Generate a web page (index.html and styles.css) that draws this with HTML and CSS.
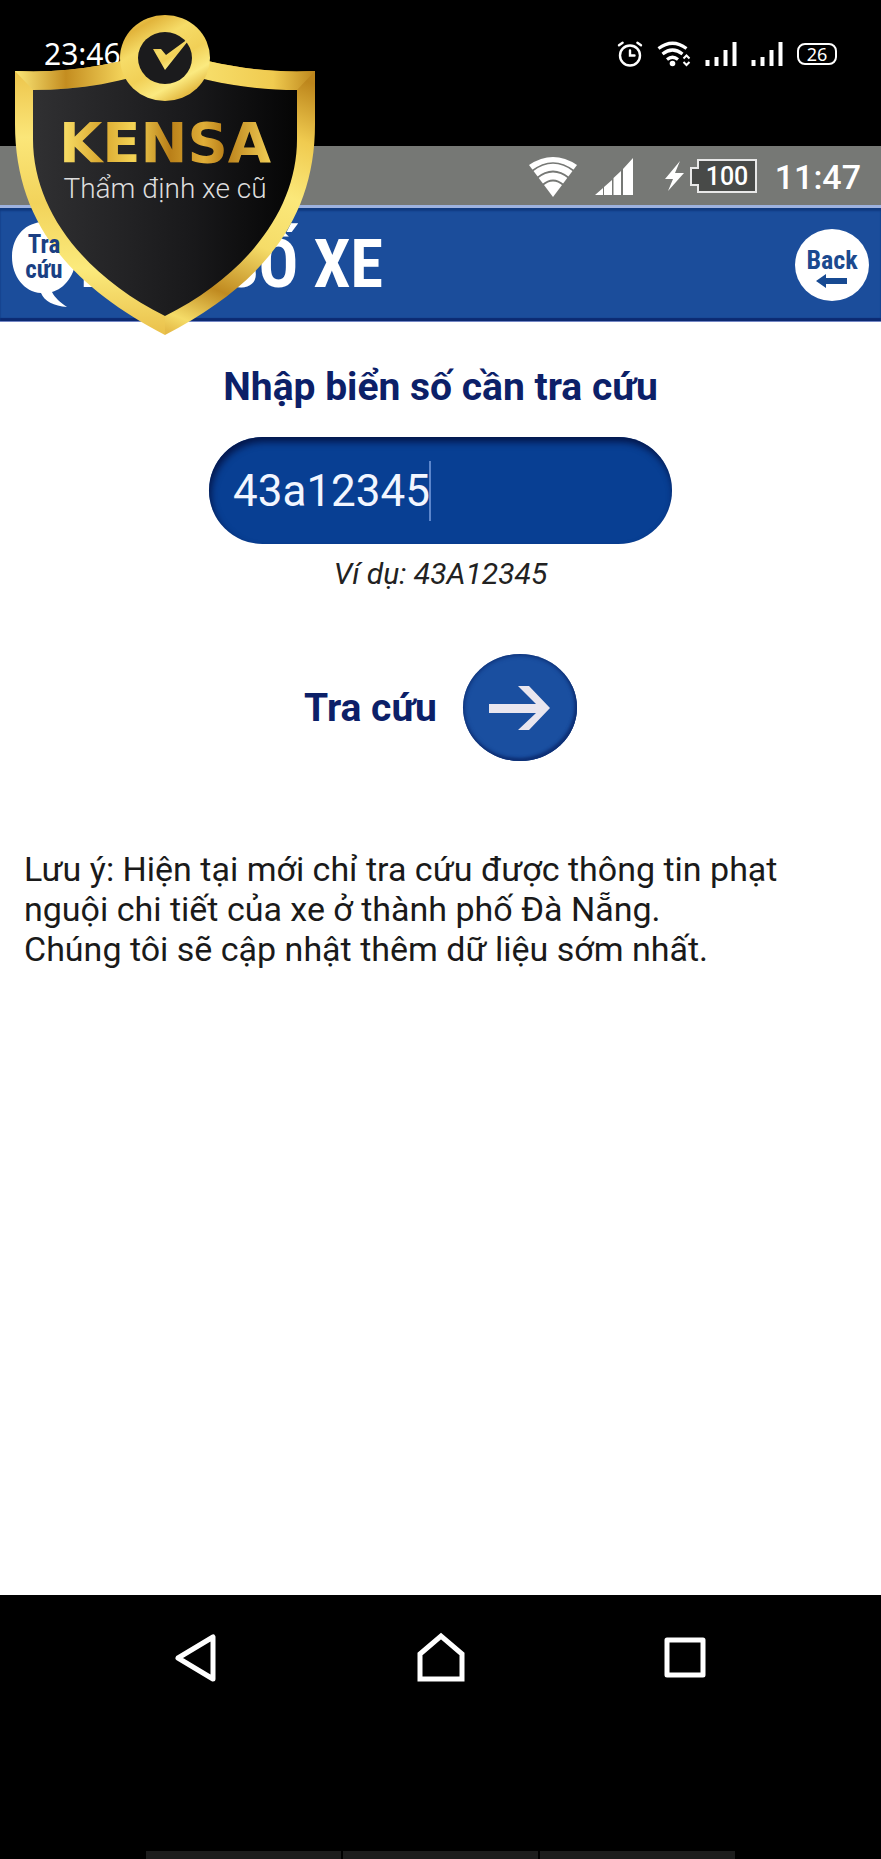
FILE: index.html
```
<!DOCTYPE html>
<html lang="vi">
<head>
<meta charset="utf-8">
<meta name="viewport" content="width=device-width, initial-scale=1">
<title>Tra cứu biển số xe</title>
<link rel="stylesheet" href="styles.css">
</head>
<body>
<div class="phone-bar">
  <span class="phone-time">23:46</span>
  <div class="phone-icons">
    <svg width="26" height="26" viewBox="0 0 26 26" fill="none" stroke="#fff" stroke-width="2.400" stroke-linecap="round"><circle cx="13" cy="14.500" r="10"/><path d="M13 9.500v5h4.500M2 4.200l3.600-2.500M24 4.200l-3.600-2.500"/></svg>
    <svg width="34" height="26" viewBox="0 0 34 26" fill="none" stroke="#fff" stroke-width="3.200"><path d="M1.500 7.500Q15.500-3 29.500 7.500M5.500 13Q15.500 5 25.500 13M10 18.500Q15.500 14 21 18.500"/><circle cx="15.500" cy="22.500" r="2.800" fill="#fff" stroke="none"/><path d="M26.500 17.500l3-3 3 3M26.500 21l3 3 3-3" stroke-width="2"/></svg>
    <svg width="32" height="26" viewBox="0 0 32 26" stroke="#fff" stroke-width="4"><path d="M2.500 19v6M11.500 16v9M20.500 9v16M29.500 1v24"/></svg>
    <svg width="32" height="26" viewBox="0 0 32 26" stroke="#fff" stroke-width="4"><path d="M2.500 19v6M11.500 16v9M20.500 9v16M29.500 1v24"/></svg>
    <span class="battery-small">26</span>
  </div>
</div>
<div class="system-bar">
  <svg width="48" height="40" viewBox="0 0 48 40" fill="#fff"><path d="M0 8Q24-8 48 8L24 40Z"/><path d="M3 14Q24-2 45 14M8 21Q24 8 40 21M13.500 28Q24 19 34.500 28" fill="none" stroke="#767875" stroke-width="1.700"/></svg>
  <svg class="signal-big" width="38" height="38" viewBox="0 0 38 38" fill="#fff"><path d="M0 37L8 30V37ZM9 29L17 22V37H9ZM18.500 20L26 13V37H18.500ZM28 11L38 0V37H28Z"/></svg>
  <svg width="92" height="36" viewBox="0 0 92 36"><path d="M15 2L0 20H8L3 32L19 14H10Z" fill="#fff"/><path d="M33 1H91V33H33V26H26V9H33Z" fill="#484a48" stroke="#e8e8e8" stroke-width="2"/><text class="battery-text" x="62" y="26" text-anchor="middle">100</text></svg>
  <span class="system-time">11:47</span>
</div>
<header class="header">
  <div class="bubble">
    <svg class="bubble-shape" viewBox="0 0 64 86" fill="#fff"><path d="M32 0C49 0 64 14 64 34C64 53 52 67 40 70C43 76 48 80 55 85C42 84 32 79 29 71C12 70 0 54 0 35C0 14 14 0 32 0Z"/></svg>
    <span class="bubble-text">Tra<br>cứu</span>
  </div>
  <h1 class="title">BIỂN SỐ XE</h1>
  <button class="back" type="button">Back
    <svg width="32" height="14" viewBox="0 0 32 14" fill="#174a92"><path d="M0 7L10 0V4H31V10H10V14Z"/></svg>
  </button>
</header>
<svg class="shield" width="300" height="322" viewBox="0 0 300 322" role="img" aria-label="Kensa">
  <defs>
    <linearGradient id="rim" x1="0" y1="0" x2="300" y2="0" gradientUnits="userSpaceOnUse">
      <stop offset="0" stop-color="#fbe878"/><stop offset=".17" stop-color="#c48d20"/><stop offset=".36" stop-color="#f3d35a"/><stop offset=".65" stop-color="#f6dc68"/><stop offset=".86" stop-color="#f0cb50"/><stop offset="1" stop-color="#bd861c"/>
    </linearGradient>
    <linearGradient id="side" x1="0" y1="58" x2="0" y2="320" gradientUnits="userSpaceOnUse">
      <stop offset="0" stop-color="#edc54c"/><stop offset=".25" stop-color="#fbe679"/><stop offset=".5" stop-color="#f2d35b"/><stop offset=".75" stop-color="#fbea7c"/><stop offset="1" stop-color="#eac14b"/>
    </linearGradient>
    <linearGradient id="sideright" x1="270" y1="58" x2="160" y2="320" gradientUnits="userSpaceOnUse">
      <stop offset="0" stop-color="#bd861c"/><stop offset=".2" stop-color="#f0cb50"/><stop offset=".4" stop-color="#fbe87a"/><stop offset=".6" stop-color="#f5dc68"/><stop offset=".8" stop-color="#c08a20"/><stop offset=".94" stop-color="#f5dc68"/><stop offset="1" stop-color="#e5bb48"/>
    </linearGradient>
    <linearGradient id="dark"><stop offset="0" stop-color="#303032"/><stop offset=".6" stop-color="#19191b"/><stop offset="1" stop-color="#050505"/></linearGradient>
    <linearGradient id="ring" x1="0" y1="0" x2=".6" y2="1"><stop offset="0" stop-color="#fbe573"/><stop offset=".2" stop-color="#e2b43b"/><stop offset=".4" stop-color="#f6dc68"/><stop offset=".65" stop-color="#f1d057"/><stop offset=".85" stop-color="#fbea80"/><stop offset="1" stop-color="#e5bc45"/></linearGradient>
    <linearGradient id="word"><stop offset="0" stop-color="#fbe36c"/><stop offset=".2" stop-color="#d9a72f"/><stop offset=".35" stop-color="#f4d355"/><stop offset=".52" stop-color="#b97f18"/><stop offset=".68" stop-color="#e0ae38"/><stop offset=".78" stop-color="#b97f18"/><stop offset="1" stop-color="#f2cf57"/></linearGradient>
  </defs>
  <path d="M0 57C55 60 105 49 150 36V321C52 270 0 205 0 110Z" fill="url(#side)"/>
  <path d="M300 57C245 60 195 49 150 36V321C248 270 300 205 300 110Z" fill="url(#sideright)"/>
  <path d="M0 57C55 60 105 49 150 36C195 49 245 60 300 57L282 76C235 76 190 68 150 53C110 68 65 76 18 76Z" fill="url(#rim)"/>
  <path d="M18 76C65 76 110 68 150 53C190 68 235 76 282 76V125C282 197 230 262 150 302C70 262 18 197 18 125Z" fill="url(#dark)"/>
  <ellipse cx="150" cy="44" rx="45" ry="43" fill="url(#ring)"/>
  <ellipse cx="150" cy="44" rx="27" ry="26" fill="#1b1b1d"/>
  <path d="M138 35L146 35L151 41L177 22L150 56Z" fill="url(#ring)"/>
  <text class="brand" x="150" y="148" text-anchor="middle" fill="url(#word)">KENSA</text>
  <text class="slogan" x="150" y="184" text-anchor="middle">Thẩm định xe cũ</text>
</svg>
<main class="content">
  <form class="form">
    <label class="form-title" for="plate">Nhập biển số cần tra cứu</label>
    <div class="field">
      <input class="field-input" id="plate" type="text" value="43a12345">
      <span class="caret"></span>
    </div>
    <p class="hint">Ví dụ: 43A12345</p>
    <div class="action">
      <label for="search">Tra cứu</label>
      <button class="search" id="search" type="button" aria-label="Tra cứu">
        <svg width="62" height="46" viewBox="0 0 62 46" fill="#e9e6ef"><path d="M0 19H47L29 1H40L61 23L40 45H29L47 28H0Z"/></svg>
      </button>
    </div>
  </form>
  <p class="note">Lưu ý: Hiện tại mới chỉ tra cứu được thông tin phạt nguội chi tiết của xe ở thành phố Đà Nẵng.<br>Chúng tôi sẽ cập nhật thêm dữ liệu sớm nhất.</p>
</main>
<nav class="nav">
  <div class="nav-buttons">
    <button class="nav-button" type="button" aria-label="Quay lại"><svg width="44" height="52" viewBox="0 0 44 52" fill="none" stroke="#fff" stroke-width="5" stroke-linejoin="round"><path d="M39 5V47L4 26Z"/></svg></button>
    <button class="nav-button" type="button" aria-label="Trang chủ"><svg width="48" height="52" viewBox="0 0 48 52" fill="none" stroke="#fff" stroke-width="5"><path d="M3 22L24 4L45 22V47H3Z"/></svg></button>
    <button class="nav-button" type="button" aria-label="Gần đây"><svg width="44" height="52" viewBox="0 0 44 52" fill="none" stroke="#fff" stroke-width="5" stroke-linejoin="round"><path d="M4 8H40V43H4Z"/></svg></button>
  </div>
  <div class="keys"><span></span><span></span><span></span></div>
</nav>
</body>
</html>
```
FILE: styles.css
```
* { box-sizing: border-box; }
body {
  margin: 0;
  min-height: 100vh;
  display: flex;
  flex-direction: column;
  position: relative;
  background: #fff;
  font-family: Roboto, "Noto Sans", sans-serif;
}
button { border: 0; padding: 0; background: none; font: inherit; cursor: pointer; }
svg { display: block; flex: none; }

.phone-bar {
  display: flex;
  justify-content: space-between;
  align-items: flex-start;
  padding: 38px 44px 76px 44px;
  background: #000;
  color: #fff;
}
.phone-time { font: 30px/32px "Noto Sans", sans-serif; }
.phone-icons { display: flex; align-items: center; gap: 14px; padding-top: 3px; }
.battery-small {
  width: 40px;
  border: 2px solid #fff;
  border-radius: 8px;
  font: 18px/18px "Noto Sans", sans-serif;
  text-align: center;
}

.system-bar {
  display: flex;
  justify-content: flex-end;
  align-items: center;
  padding: 2px 20px 0 20px;
  height: 59px;
  background: #767875;
  color: #fff;
}
.signal-big { margin: 0 32px 0 18px; }
.battery-text { font: 500 25px Roboto, sans-serif; fill: #fff; }
.system-time { margin-left: 18px; font-size: 34px; font-weight: 500; line-height: 40px; }

.header {
  display: flex;
  align-items: center;
  height: 117px;
  padding: 0 12px;
  background: #1b4d9b;
  border-top: 3px solid #9db2e0;
  border-bottom: 1px solid #7386c4;
  box-shadow: inset 0 3px 2px #103a80, inset 0 -3px 1px #0c2a72;
}
.bubble { display: grid; width: 64px; }
.bubble-shape { grid-area: 1 / 1; width: 64px; }
.bubble-text {
  grid-area: 1 / 1;
  padding-top: 10px;
  color: #1a3f83;
  font: bold 25px/25px "Roboto Condensed", "Liberation Sans Narrow", Roboto, sans-serif;
  text-align: center;
  z-index: 1;
}
.title {
  flex: 1;
  margin: 0 0 0 4px;
  color: #fff;
  font: bold 66px/80px "Roboto Condensed", "Liberation Sans Narrow", Roboto, sans-serif;
  white-space: nowrap;
}
.back {
  display: flex;
  flex-direction: column;
  align-items: center;
  width: 74px;
  height: 72px;
  padding-top: 17px;
  border-radius: 50%;
  background: #fff;
  color: #1c4a8f;
  font: bold 26px/28px "Roboto Condensed", "Liberation Sans Narrow", Roboto, sans-serif;
}

.shield { position: absolute; left: 15px; top: 14px; }
.brand { font: bold 56px "DejaVu Sans", sans-serif; }
.slogan { font: 300 28px Roboto, sans-serif; fill: #ddd; }

.content { flex: 1; padding: 40px 24px; }
.form { display: flex; flex-direction: column; align-items: center; }
.form-title { color: #0c2068; font-size: 39px; font-weight: 700; line-height: 50px; }
.field {
  display: flex;
  align-items: center;
  width: 463px;
  max-width: 100%;
  height: 107px;
  margin-top: 25px;
  padding: 0 24px;
  border-radius: 54px;
  background: #083f93;
  box-shadow: inset 2px 5px 7px #04164a;
}
.field-input {
  width: 196px;
  padding: 0;
  border: 0;
  outline: 0;
  background: none;
  color: #f2f6ff;
  font: 44px/56px Roboto, sans-serif;
}
.caret { width: 2px; height: 60px; background: #5c86cc; }
.hint { margin: 13px 0 0; color: #222; font-size: 30px; font-style: italic; line-height: 34px; }
.action {
  display: flex;
  align-items: center;
  gap: 26px;
  margin-top: 63px;
  color: #0c2068;
  font-size: 39px;
  font-weight: 700;
}
.search {
  display: flex;
  align-items: center;
  justify-content: center;
  width: 114px;
  height: 107px;
  border-radius: 50%;
  background: #1a4fa0;
  box-shadow: inset 0 0 4px 1px #0c2c70, inset -2px -3px 3px #10357c;
}
.note { margin: 88px 0 0; color: #1a1a1a; font-size: 34px; line-height: 40px; }

.nav { background: #000; padding-top: 37px; }
.nav-buttons { display: flex; justify-content: space-between; padding: 0 174px; }
.nav-button { display: flex; }
.keys { display: flex; justify-content: center; gap: 2px; margin: 167px 146px 0; }
.keys span { flex: 1; height: 8px; background: #1d1d1d; }
```
